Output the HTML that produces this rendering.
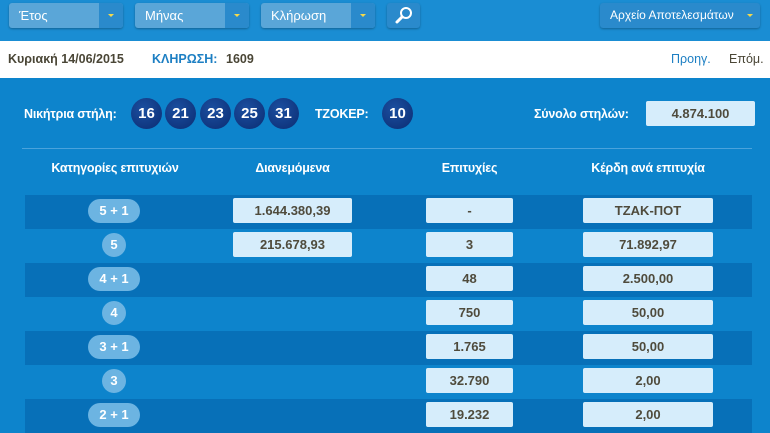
<!DOCTYPE html>
<html><head><meta charset="utf-8"><style>
*{margin:0;padding:0;box-sizing:border-box}
body{width:770px;height:433px;overflow:hidden;background:#0d84cc;font-family:"Liberation Sans",Arial,sans-serif;position:relative}
.a{position:absolute}
.top{left:0;top:0;width:770px;height:41px;background:#1a8dd3}
.sel{height:25px;top:3px;background:#5aa6d8;border-radius:3px;color:#fff;font-size:13px;line-height:25px;padding-left:10px;box-shadow:0 1px 2px rgba(0,0,0,.3)}
.sel i{position:absolute;right:0;top:0;width:24px;height:25px;background:#2a8acc;border-radius:0 3px 3px 0}
.sel i:after{content:"";position:absolute;left:9px;top:11px;border-left:3px solid transparent;border-right:3px solid transparent;border-top:3px solid #f5d94a}
.white{left:0;top:41px;width:770px;height:37px;background:#fff;font-size:12.5px;font-weight:bold;line-height:37px}
.ball{width:31px;height:31px;border-radius:50%;background:radial-gradient(circle at 40% 35%,#1b4fa0,#0b2c72);color:#fff;font-weight:bold;font-size:15px;text-align:center;line-height:31px;top:98px}
.lbl{color:#fff;font-weight:bold;font-size:12.5px;letter-spacing:-0.2px}
.row{left:25px;width:727px;height:34px}
.pill{background:#6cb4e2;color:#fff;font-weight:bold;font-size:13px;height:24px;line-height:24px;border-radius:12px;text-align:center}
.box{background:#d6edfb;color:#4f4b3c;font-weight:bold;font-size:13px;height:25px;line-height:25px;text-align:center;border-radius:2px}
</style></head><body>
<div class="a top"></div>
<div class="a sel" style="left:9px;width:114px">Έτος<i></i></div>
<div class="a sel" style="left:135px;width:114px">Μήνας<i></i></div>
<div class="a sel" style="left:261px;width:114px">Κλήρωση<i></i></div>
<div class="a sel" style="left:387px;width:33px;padding:0;background:#2a8acc"><svg width="33" height="25"><circle cx="19" cy="10" r="5" fill="none" stroke="#fff" stroke-width="2"/><path d="M15 14 L10 19" stroke="#fff" stroke-width="3" stroke-linecap="round"/></svg></div>
<div class="a sel" style="left:600px;width:160px;background:#2a8acc;padding-left:10px;font-size:12px">Αρχείο Αποτελεσμάτων<span style="position:absolute;right:7px;top:11px;border-left:3px solid transparent;border-right:3px solid transparent;border-top:3px solid #f5d94a"></span></div>
<div class="a white">
<span class="a" style="left:8px;color:#4a4636">Κυριακή 14/06/2015</span>
<span class="a" style="left:152px;color:#1d7fc3">ΚΛΗΡΩΣΗ:</span>
<span class="a" style="left:226px;color:#4a4636">1609</span>
<span class="a" style="left:671px;color:#1d7fc3;font-weight:normal">Προηγ.</span>
<span class="a" style="left:729px;color:#4a4636;font-weight:normal">Επόμ.</span>
</div>
<div class="a lbl" style="left:24px;top:107px">Νικήτρια στήλη:</div>
<div class="a ball" style="left:131px">16</div>
<div class="a ball" style="left:165px">21</div>
<div class="a ball" style="left:200px">23</div>
<div class="a ball" style="left:234px">25</div>
<div class="a ball" style="left:268px">31</div>
<div class="a lbl" style="left:315px;top:107px">ΤΖΟΚΕΡ:</div>
<div class="a ball" style="left:382px">10</div>
<div class="a lbl" style="left:534px;top:107px">Σύνολο στηλών:</div>
<div class="a box" style="left:646px;top:101px;width:109px">4.874.100</div>
<div class="a" style="left:22px;top:148px;width:730px;height:1px;background:#4aa3dc"></div>
<div class="a lbl" style="left:25px;width:180px;text-align:center;top:161px">Κατηγορίες επιτυχιών</div>
<div class="a lbl" style="left:233px;width:119px;text-align:center;top:161px">Διανεμόμενα</div>
<div class="a lbl" style="left:426px;width:87px;text-align:center;top:161px">Επιτυχίες</div>
<div class="a lbl" style="left:583px;width:130px;text-align:center;top:161px">Κέρδη ανά επιτυχία</div>

<div class="a row" style="top:195px;background:#0770b8"></div>
<div class="a row" style="top:263px;background:#0770b8"></div>
<div class="a row" style="top:331px;background:#0770b8"></div>
<div class="a row" style="top:399px;background:#0770b8"></div>

<div class="a pill" style="left:88px;width:52px;top:199px">5 + 1</div>
<div class="a pill" style="left:102px;width:24px;top:233px">5</div>
<div class="a pill" style="left:88px;width:52px;top:267px">4 + 1</div>
<div class="a pill" style="left:102px;width:24px;top:301px">4</div>
<div class="a pill" style="left:88px;width:52px;top:335px">3 + 1</div>
<div class="a pill" style="left:102px;width:24px;top:369px">3</div>
<div class="a pill" style="left:88px;width:52px;top:403px">2 + 1</div>

<div class="a box" style="left:233px;width:119px;top:198px">1.644.380,39</div>
<div class="a box" style="left:233px;width:119px;top:232px">215.678,93</div>

<div class="a box" style="left:426px;width:87px;top:198px">-</div>
<div class="a box" style="left:426px;width:87px;top:232px">3</div>
<div class="a box" style="left:426px;width:87px;top:266px">48</div>
<div class="a box" style="left:426px;width:87px;top:300px">750</div>
<div class="a box" style="left:426px;width:87px;top:334px">1.765</div>
<div class="a box" style="left:426px;width:87px;top:368px">32.790</div>
<div class="a box" style="left:426px;width:87px;top:402px">19.232</div>

<div class="a box" style="left:583px;width:130px;top:198px">ΤΖΑΚ-ΠΟΤ</div>
<div class="a box" style="left:583px;width:130px;top:232px">71.892,97</div>
<div class="a box" style="left:583px;width:130px;top:266px">2.500,00</div>
<div class="a box" style="left:583px;width:130px;top:300px">50,00</div>
<div class="a box" style="left:583px;width:130px;top:334px">50,00</div>
<div class="a box" style="left:583px;width:130px;top:368px">2,00</div>
<div class="a box" style="left:583px;width:130px;top:402px">2,00</div>
</body></html>
